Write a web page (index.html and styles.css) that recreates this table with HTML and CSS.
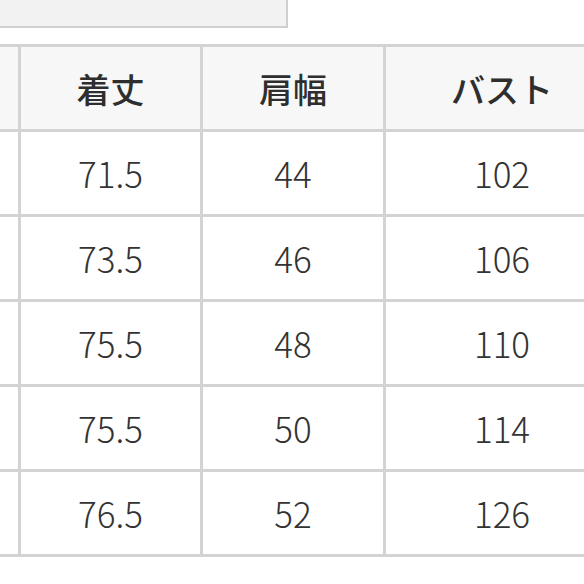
FILE: index.html
```html
<!DOCTYPE html>
<html lang="ja">
<head>
<meta charset="utf-8">
<link rel="stylesheet" href="styles.css">
</head>
<body>
<div class="page">
  <div class="topbox"></div>
  <table class="size-table">
    <colgroup>
      <col class="c0"><col class="c1"><col class="c2"><col class="c3">
    </colgroup>
    <thead>
      <tr><th></th><th>着丈</th><th>肩幅</th><th>バスト</th></tr>
    </thead>
    <tbody>
      <tr><td></td><td>71.5</td><td>44</td><td>102</td></tr>
      <tr><td></td><td>73.5</td><td>46</td><td>106</td></tr>
      <tr><td></td><td>75.5</td><td>48</td><td>110</td></tr>
      <tr><td></td><td>75.5</td><td>50</td><td>114</td></tr>
      <tr><td></td><td>76.5</td><td>52</td><td>126</td></tr>
    </tbody>
  </table>
</div>
</body>
</html>
```

FILE: styles.css
```css
html, body {
  margin: 0;
  padding: 0;
  background: #ffffff;
}
.page {
  width: 584px;
  height: 584px;
  overflow: hidden;
  font-family: "Noto Sans CJK JP", "Noto Sans", sans-serif;
  color: #333333;
}
.topbox {
  width: 288px;
  height: 28px;
  box-sizing: border-box;
  background: #f2f2f2;
  border-right: 2px solid #d0d0d0;
  border-bottom: 2px solid #d0d0d0;
}
.size-table {
  margin-top: 16px;
  margin-left: -142px;
  border-collapse: collapse;
  table-layout: fixed;
  width: 760px;
}
.c0 { width: 160px; }
.c1 { width: 182px; }
.c2 { width: 183px; }
.c3 { width: 235px; }
.size-table th,
.size-table td {
  border: 3px solid #d3d3d3;
  padding: 0;
  text-align: center;
  vertical-align: middle;
  line-height: 1;
}
.size-table th {
  height: 80px;
  padding-top: 2px;
  background: #f7f7f7;
  font-size: 34px;
  font-weight: 500;
  color: #2e2e2e;
}
.size-table td {
  height: 81px;
  padding-bottom: 1px;
  font-size: 35px;
  font-weight: 300;
  color: #333333;
}
```
